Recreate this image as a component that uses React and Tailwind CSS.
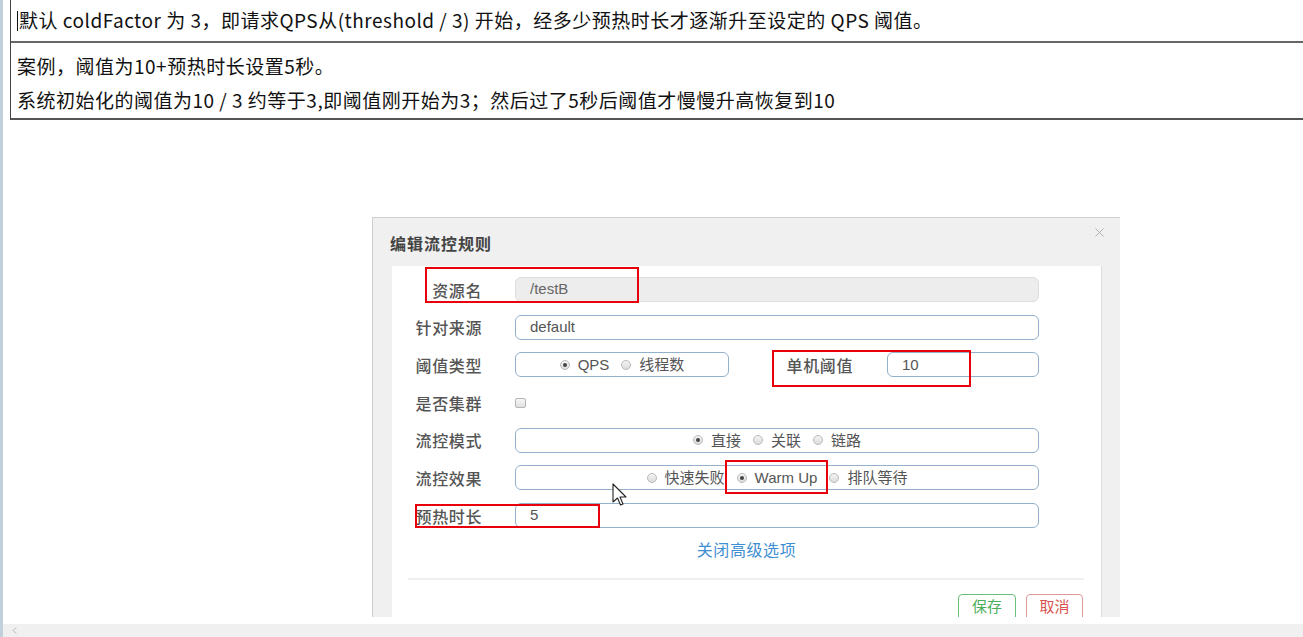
import { X, ChevronLeft } from "lucide-react";

const cjk = "font-['Noto_Sans_CJK_SC','Noto_Sans',sans-serif]";
const ui = "font-['Liberation_Sans','Noto_Sans_CJK_SC',sans-serif]";

function Radio({ checked, label }) {
  return (
    <span className="flex items-center gap-[8px]">
      <span className="flex h-[10px] w-[10px] items-center justify-center rounded-full border border-[#b9b9b9] bg-gradient-to-b from-[#f4f4f4] to-[#dcdcdc]">
        {checked && <span className="h-[4px] w-[4px] rounded-full bg-[#444]" />}
      </span>
      <span className="text-[15px] leading-none text-[#555]">{label}</span>
    </span>
  );
}

function Label({ children, className = "w-[90px]" }) {
  return (
    <div className={`${className} shrink-0 text-right text-[16px] font-medium tracking-[0.6px] text-[#555] ${cjk}`}>
      {children}
    </div>
  );
}

function Row({ label, children }) {
  return (
    <div className="flex h-[25px] items-center">
      <Label>{label}</Label>
      <div className="ml-[33px] flex h-full items-center">{children}</div>
    </div>
  );
}

function Box({ children, className = "w-[524px]", center }) {
  return (
    <div
      className={`${className} flex h-[25px] items-center rounded-[6px] border border-[#93b0cc] bg-white ${
        center ? "justify-center gap-[12px]" : "px-[14px]"
      } ${ui}`}
    >
      {children}
    </div>
  );
}

function Cursor() {
  return (
    <svg width="16" height="24" viewBox="0 0 16 24" className="absolute left-[220px] top-[217px]">
      <path
        d="M1 1 L1 19 L5.5 15 L8.5 22 L11 21 L8 14 L14 14 Z"
        fill="#fff"
        stroke="#222"
        strokeWidth="1.1"
        strokeLinejoin="round"
      />
    </svg>
  );
}

export default function App() {
  return (
    <div className={`flex h-[637px] w-full flex-col overflow-hidden border-l-[3px] border-[#c3cfdc] bg-white ${cjk}`}>
      {/* note table */}
      <div className="ml-[7px] shrink-0 border-l border-[#444] text-[19px] tracking-[0.5px] text-[#111]">
        <div className="flex h-[43px] items-center border-b-2 border-[#666] pl-[6px]">
          <span className="mr-[1px] h-[20px] w-px bg-[#111]" />
          默认 coldFactor 为 3，即请求QPS从(threshold / 3) 开始，经多少预热时长才逐渐升至设定的 QPS 阈值。
        </div>
        <div className="border-b-2 border-[#555] pb-[1px] pl-[6px] pt-[6px] leading-[34px]">
          <p>案例，阈值为10+预热时长设置5秒。</p>
          <p>系统初始化的阈值为10 / 3 约等于3,即阈值刚开始为3；然后过了5秒后阈值才慢慢升高恢复到10</p>
        </div>
      </div>

      {/* dialog screenshot */}
      <div className="ml-[369px] mt-[97px] flex h-[400px] w-[748px] shrink-0 flex-col overflow-hidden border-l border-t border-[#cfcfcf] bg-[#f0f0f0]">
        <div className="flex h-[48px] shrink-0 justify-between">
          <div className="ml-[17px] mt-[13px] text-[16px] font-bold leading-[24px] tracking-[1px] text-[#444]">编辑流控规则</div>
          <X size={15} strokeWidth={1.4} className="mr-[13px] mt-[7px] text-[#a8a8a8]" />
        </div>

        <div className="relative ml-[19px] flex w-[710px] flex-1 flex-col border-r border-[#dcdcdc] bg-white pt-[11px]">
          <div className="flex flex-col gap-[12.7px]">
            <Row label="资源名">
              <div className={`flex h-[25px] w-[524px] items-center rounded-[6px] border border-[#dedede] bg-[#ededed] px-[14px] text-[15px] text-[#666] ${ui}`}>
                /testB
              </div>
            </Row>
            <Row label="针对来源">
              <Box>
                <span className="text-[15px] text-[#555]">default</span>
              </Box>
            </Row>
            <div className="flex h-[25px] items-center">
              <Label>阈值类型</Label>
              <div className="ml-[33px] flex items-center">
                <Box className="w-[214px]" center>
                  <Radio checked label="QPS" />
                  <Radio label="线程数" />
                </Box>
                <Label className="w-[124px]">单机阈值</Label>
                <div className="ml-[34px]">
                  <Box className="w-[152px]">
                    <span className="text-[15px] text-[#555]">10</span>
                  </Box>
                </div>
              </div>
            </div>
            <Row label="是否集群">
              <span className="h-[10px] w-[11px] rounded-[2px] border border-[#b5b5b5] bg-gradient-to-b from-[#f7f7f7] to-[#e0e0e0]" />
            </Row>
            <Row label="流控模式">
              <Box center>
                <Radio checked label="直接" />
                <Radio label="关联" />
                <Radio label="链路" />
              </Box>
            </Row>
            <Row label="流控效果">
              <Box center>
                <Radio label="快速失败" />
                <Radio checked label="Warm Up" />
                <Radio label="排队等待" />
              </Box>
            </Row>
            <Row label="预热时长">
              <Box>
                <span className="text-[15px] text-[#555]">5</span>
              </Box>
            </Row>
          </div>

          <div className="mt-[11px] text-center text-[16px] leading-[20px] tracking-[0.6px] text-[#3f8fd2]">关闭高级选项</div>
          <div className="ml-[16px] mr-[17px] mt-[19px] h-[2px] bg-[#f0f0f0]" />
          <div className="mr-[18px] mt-[14px] flex justify-end gap-[10px]">
            <button className="flex h-[30px] w-[58px] items-start justify-center rounded-[4px] border border-[#6cbf7a] bg-white pt-[2px] text-[15px] leading-[18px] text-[#4cae5c]">保存</button>
            <button className="flex h-[30px] w-[57px] items-start justify-center rounded-[4px] border border-[#e09a9a] bg-white pt-[2px] text-[15px] leading-[18px] text-[#d9534f]">取消</button>
          </div>

          {/* annotation boxes */}
          <div className="absolute left-[33px] top-[1px] h-[36px] w-[214px] border-2 border-[#e8000b]" />
          <div className="absolute left-[380px] top-[84px] h-[37px] w-[199px] border-2 border-[#e8000b]" />
          <div className="absolute left-[333px] top-[194px] h-[34px] w-[103px] border-2 border-[#e8000b]" />
          <div className="absolute left-[23px] top-[238px] h-[24px] w-[185px] border-2 border-[#e8000b]" />
          <Cursor />
        </div>
      </div>

      {/* horizontal scrollbar */}
      <div className="mt-auto flex h-[13px] shrink-0 items-center bg-[#f0f0f0] pl-[6px]">
        <ChevronLeft size={11} strokeWidth={2} className="text-[#b0b0b0]" />
      </div>
    </div>
  );
}
